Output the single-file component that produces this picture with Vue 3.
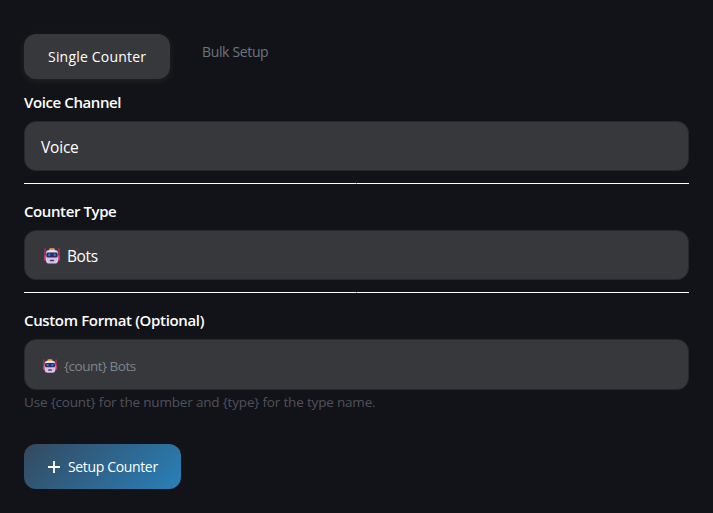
<script setup>
import { ref } from 'vue'

const tab = ref('single')
const fields = [
  { label: 'Voice Channel', value: 'Voice', robot: false, cls: 'voice' },
  { label: 'Counter Type', value: 'Bots', robot: true, cls: 'type' },
]
</script>

<template>
  <svg class="defs" width="0" height="0" aria-hidden="true">
    <symbol id="robot" viewBox="0 0 16 16">
      <path d="M1 1v11M15 1v11" stroke="#c42a5a" stroke-width="1.3" stroke-linecap="round" />
      <path d="M0.4 7.4h2v5h-1.300l-.7-1zM15.600 7.400h-2v5h1.300l.7-1z" fill="#ef3f70" />
      <rect x="5.200" y="0.300" width="5.600" height="3" rx="1" fill="#f5a62f" />
      <rect x="1.900" y="2" width="12.200" height="13.600" rx="3.400" fill="#d8c2e6" />
      <path d="M3 4q1.400-1.600 4-1.600h2q2.600 0 4 1.600z" fill="#f2e3f5" />
      <rect x="2.300" y="4.500" width="11.400" height="4.900" rx="1.500" fill="#332a5c" />
      <rect x="4.200" y="5.400" width="2.200" height="2.900" rx="1" fill="#1686d9" />
      <rect x="9.600" y="5.400" width="2.200" height="2.900" rx="1" fill="#1686d9" />
      <rect x="5.800" y="11.800" width="4.400" height="1.500" rx=".6" fill="#4b3566" />
    </symbol>
  </svg>
  <main class="panel">
    <nav class="tabs">
      <button class="tab" :class="{ active: tab === 'single' }" @click="tab = 'single'"><span class="t-single">Single Counter</span></button>
      <button class="tab bulk" :class="{ active: tab === 'bulk' }" @click="tab = 'bulk'"><span class="t-bulk">Bulk Setup</span></button>
    </nav>

    <section v-for="f in fields" :key="f.label" class="group">
      <div class="label">{{ f.label }}</div>
      <div class="control" :class="f.cls">
        <svg v-if="f.robot" class="robot"><use href="#robot" /></svg>
        <span>{{ f.value }}</span>
      </div>
      <div class="divider"><i></i><b></b><i></i></div>
    </section>

    <section class="group">
      <div class="label format">Custom Format (Optional)</div>
      <label class="control input">
        <svg class="robot small"><use href="#robot" /></svg>
        <span class="placeholder">{count} Bots</span>
      </label>
      <div class="hint"><span>Use {count} for the number and {type} for the type name.</span></div>
    </section>

    <button class="submit">
      <svg class="plus" viewBox="0 0 12 12"><path d="M6 0v12M0 6h12" /></svg>
      <span>Setup Counter</span>
    </button>
  </main>
</template>

<style>
body {
  background: #121318;
}
</style>

<style scoped>
.defs {
  display: block;
}
.panel {
  box-sizing: border-box;
  width: 713px;
  height: 513px;
  padding: 34px 24px 24px;
  background: #121318;
  font-family: 'Segoe UI', 'Open Sans', 'Noto Sans', sans-serif;
  color: #fff;
  white-space: nowrap;
}
button {
  font: inherit;
  border: 0;
  padding: 0;
  background: none;
}
.tabs {
  display: flex;
  gap: 8px;
  align-items: flex-start;
  height: 59px;
}
.tab {
  box-sizing: border-box;
  height: 45px;
  padding: 0 24px;
  border-radius: 12px;
  font-size: 14px;
  line-height: 20px;
  color: #6c757d;
}
.tab.bulk {
  height: 36px;
}
.tab.active {
  width: 146px;
  background: #37383c;
  color: #fff;
  box-shadow: 0 2px 8px rgba(255, 230, 120, 0.08);
}
.t-single {
  letter-spacing: 0.2px;
}
.t-bulk {
  letter-spacing: -0.35px;
}
.group {
  height: 109px;
}
.label {
  height: 28px;
  line-height: 18px;
  font-size: 15px;
  font-weight: 600;
  letter-spacing: -0.4px;
}
.label.format {
  letter-spacing: -0.35px;
}
.control {
  box-sizing: border-box;
  display: flex;
  align-items: center;
  height: 50px;
  padding: 2px 16px 0;
  border: 1px solid #27282d;
  border-radius: 12px;
  background: #37383c;
  font-size: 15.500px;
  letter-spacing: -0.4px;
}
.control.voice {
  letter-spacing: -0.2px;
}
.input {
  height: 51px;
}
.robot {
  flex-shrink: 0;
  width: 16px;
  height: 16px;
  margin: 0 7px 0 3px;
}
.robot.small {
  width: 14px;
  height: 14px;
  margin: 0 7px 0 2px;
}
.placeholder {
  font-size: 13.500px;
  letter-spacing: -0.5px;
  color: #7b858f;
}
.divider {
  display: flex;
  height: 1px;
  margin-top: 12px;
}
.divider i {
  flex: 1;
  background: #fff;
}
.divider b {
  width: 1px;
  background: #a5a6a9;
}
.hint {
  margin-top: 2px;
  font-size: 13.500px;
  line-height: 20px;
  letter-spacing: -0.18px;
  color: #50515c;
}
.submit {
  display: flex;
  align-items: center;
  width: 157px;
  height: 45px;
  margin-top: 24px;
  padding: 0 24px;
  border-radius: 12px;
  background: linear-gradient(135deg, #34495e, #2980b9);
  color: #fff;
  font-size: 14px;
  letter-spacing: -0.35px;
}
.plus {
  flex-shrink: 0;
  width: 12px;
  height: 12px;
  margin-right: 8px;
  fill: none;
  stroke: #fff;
  stroke-width: 1.800;
}
</style>
